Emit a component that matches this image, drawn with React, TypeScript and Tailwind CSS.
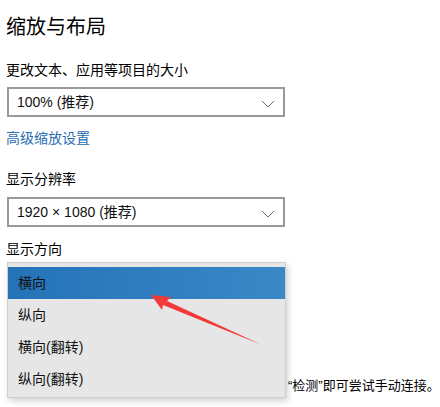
import React from "react";

const font = { fontFamily: '"Liberation Sans", "Noto Sans CJK SC", sans-serif' };

function Chevron() {
  return (
    <svg width="14" height="8" viewBox="0 0 14 8" className="absolute right-[8px] top-[11px]">
      <path d="M1 1 L7 7 L13 1" fill="none" stroke="#6b6b6b" strokeWidth="1" />
    </svg>
  );
}

function Select({ text }: { text: string }) {
  return (
    <div className="relative ml-[7px] h-[30px] w-[278px] border-2 border-[#999999] bg-white flex items-center pl-[8px] text-[14px] text-[#111]">
      {text}
      <Chevron />
    </div>
  );
}

export default function App() {
  const items = ["横向", "纵向", "横向(翻转)", "纵向(翻转)"];
  return (
    <div className="relative w-[440px] h-[407px] overflow-hidden bg-white text-black" style={font}>
      <div className="pl-[6px] pt-[13px] flex flex-col">
        <div className="text-[20px] leading-[28px]">缩放与布局</div>
        <div className="mt-[19px] text-[14px] leading-[20px]">更改文本、应用等项目的大小</div>
        <div className="mt-[7px] -ml-[6px]">
          <Select text="100% (推荐)" />
        </div>
        <div className="mt-[11px] text-[14px] leading-[20px] text-[#2a6db0]">高级缩放设置</div>
        <div className="mt-[21px] text-[14px] leading-[20px]">显示分辨率</div>
        <div className="mt-[8px] -ml-[6px]">
          <Select text="1920 × 1080 (推荐)" />
        </div>
        <div className="mt-[12px] text-[14px] leading-[20px]">显示方向</div>
        <div className="mt-[117px] pl-[282px] whitespace-nowrap text-[13px] leading-[20px]">“检测”即可尝试手动连接。</div>
      </div>

      <div className="absolute left-[7px] top-[262px] w-[279px] h-[136px] bg-[#e6e6e6] border border-[#d0d0d0] shadow-[2px_3px_6px_rgba(0,0,0,0.18)] pt-[4px]">
        {items.map((t, i) => (
          <div
            key={t}
            className={
              "h-[32px] flex items-center pl-[10px] text-[14px] text-[#111] " +
              (i === 0 ? "bg-gradient-to-r from-[#2473b8] to-[#3a88c6]" : "")
            }
          >
            {t}
          </div>
        ))}
      </div>

      <svg className="absolute left-0 top-0" width="440" height="407" viewBox="0 0 440 407">
        <polygon
          points="151,295 171,297 167,301 262,345 163,305 162,310"
          fill="#f23a3a"
        />
      </svg>
    </div>
  );
}
